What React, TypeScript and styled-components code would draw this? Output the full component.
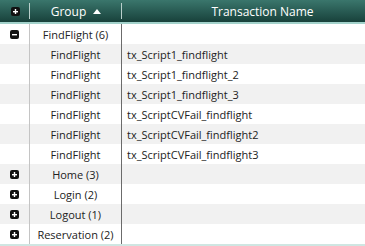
import React from "react";
import styled, { createGlobalStyle } from "styled-components";

const Global = createGlobalStyle`
  html, body { margin: 0; padding: 0; background: #fff; overflow: hidden; }
  body { font-family: "Open Sans", "Noto Sans", sans-serif; }
`;

const Table = styled.div`
  width: 100%;
  overflow: hidden;
  display: grid;
  grid-template-columns: 30px 92px 1fr;
  font-size: 11px;
  color: #222;
`;

const HeaderCell = styled.div<{ $sep?: boolean; $shift?: number }>`
  position: relative;
  height: 22px;
  display: flex;
  align-items: center;
  justify-content: center;
  gap: 7px;
  padding-left: ${(p) => p.$shift || 0}px;
  background: linear-gradient(#3a766c, #18413b);
  border-bottom: 2px solid #a3d2cb;
  color: #fff;
  font-size: 12px;
  white-space: nowrap;
  &::after {
    content: "";
    display: ${(p) => (p.$sep ? "block" : "none")};
    position: absolute;
    right: 0;
    top: 3px;
    bottom: 3px;
    width: 1px;
    background: #b9cfcb;
  }
`;

const Cell = styled.div<{ $alt: boolean; $kind: "icon" | "group" | "name" }>`
  height: 20px;
  box-sizing: border-box;
  display: flex;
  align-items: center;
  background: ${(p) => (p.$alt ? "#f1f1f1" : "#fff")};
  justify-content: ${(p) =>
    p.$kind === "name" ? "flex-start" : "center"};
  padding-left: ${(p) => (p.$kind === "name" ? "5px" : "0")};
  border-right: ${(p) =>
    p.$kind === "icon"
      ? "1px solid #c4c4c4"
      : p.$kind === "group"
      ? "1px solid #6b6b6b"
      : "none"};
  white-space: nowrap;
`;

const Footer = styled.div`
  grid-column: 1 / -1;
  height: 2px;
  background: #cfe6e2;
`;

const Toggle = ({ open }: { open: boolean }) => (
  <svg width="9" height="9" viewBox="0 0 9 9">
    <rect x="0" y="0" width="9" height="9" rx="2" fill="#111" />
    <rect x="2" y="4" width="5" height="1.4" fill="#fff" />
    {!open && <rect x="3.8" y="2" width="1.4" height="5" fill="#fff" />}
  </svg>
);

const SortArrow = () => (
  <svg width="8" height="5" viewBox="0 0 8 5">
    <polygon points="0,5 4,0 8,5" fill="#fff" />
  </svg>
);

type Row =
  | { type: "group"; label: string; open: boolean }
  | { type: "item"; group: string; name: string };

const rows: Row[] = [
  { type: "group", label: "FindFlight (6)", open: true },
  { type: "item", group: "FindFlight", name: "tx_Script1_findflight" },
  { type: "item", group: "FindFlight", name: "tx_Script1_findflight_2" },
  { type: "item", group: "FindFlight", name: "tx_Script1_findflight_3" },
  { type: "item", group: "FindFlight", name: "tx_ScriptCVFail_findflight" },
  { type: "item", group: "FindFlight", name: "tx_ScriptCVFail_findflight2" },
  { type: "item", group: "FindFlight", name: "tx_ScriptCVFail_findflight3" },
  { type: "group", label: "Home (3)", open: false },
  { type: "group", label: "Login (2)", open: false },
  { type: "group", label: "Logout (1)", open: false },
  { type: "group", label: "Reservation (2)", open: false },
];

export default function App() {
  return (
    <>
      <Global />
      <Table>
        <HeaderCell $sep>
          <Toggle open={false} />
        </HeaderCell>
        <HeaderCell $sep>
          <span>Group</span>
          <SortArrow />
        </HeaderCell>
        <HeaderCell $shift={38}>Transaction Name</HeaderCell>
        {rows.map((r, i) => {
          const alt = i % 2 === 1;
          return (
            <React.Fragment key={i}>
              <Cell $alt={alt} $kind="icon">
                {r.type === "group" && <Toggle open={r.open} />}
              </Cell>
              <Cell $alt={alt} $kind="group">
                {r.type === "group" ? r.label : r.group}
              </Cell>
              <Cell $alt={alt} $kind="name">
                {r.type === "item" ? r.name : ""}
              </Cell>
            </React.Fragment>
          );
        })}
        <Footer />
      </Table>
    </>
  );
}
